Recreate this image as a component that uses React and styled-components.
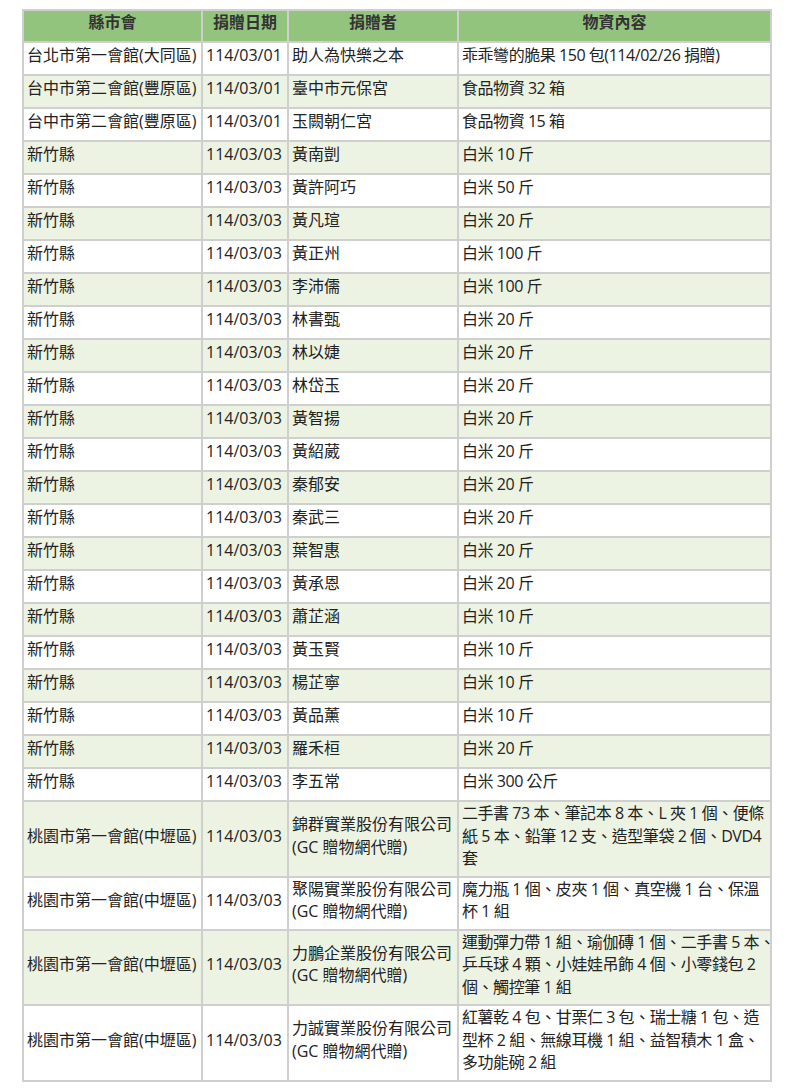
import React from "react";
import styled, { createGlobalStyle } from "styled-components";

const GlobalStyle = createGlobalStyle`
  body {
    margin: 0;
    background: #ffffff;
    font-family: "Open Sans", "Noto Sans CJK TC", sans-serif;
    color: #222222;
  }
`;

const donors = [
  "黃南剴", "黃許阿巧", "黃凡瑄", "黃正州", "李沛儒", "林書甄", "林以婕",
  "林岱玉", "黃智揚", "黃紹葳", "秦郁安", "秦武三", "葉智惠", "黃承恩",
  "蕭芷涵", "黃玉賢", "楊芷寧", "黃品薰", "羅禾桓", "李五常",
];
const riceAmount = [
  "10 斤", "50 斤", "20 斤", "100 斤", "100 斤", "20 斤", "20 斤",
  "20 斤", "20 斤", "20 斤", "20 斤", "20 斤", "20 斤", "20 斤",
  "10 斤", "10 斤", "10 斤", "10 斤", "20 斤", "300 公斤",
];

const rows = [
  {
    branch: "台北市第一會館(大同區)",
    date: "114/03/01",
    donor: ["助人為快樂之本"],
    items: ["乖乖彎的脆果 150 包(114/02/26 捐贈)"],
  },
  {
    branch: "台中市第二會館(豐原區)",
    date: "114/03/01",
    donor: ["臺中市元保宮"],
    items: ["食品物資 32 箱"],
  },
  {
    branch: "台中市第二會館(豐原區)",
    date: "114/03/01",
    donor: ["玉闕朝仁宮"],
    items: ["食品物資 15 箱"],
  },
  ...donors.map((name, i) => ({
    branch: "新竹縣",
    date: "114/03/03",
    donor: [name],
    items: ["白米 " + riceAmount[i]],
  })),
  {
    branch: "桃園市第一會館(中壢區)",
    date: "114/03/03",
    donor: ["錦群實業股份有限公司", "(GC 贈物網代贈)"],
    items: [
      "二手書 73 本、筆記本 8 本、L 夾 1 個、便條",
      "紙 5 本、鉛筆 12 支、造型筆袋 2 個、DVD4",
      "套",
    ],
  },
  {
    branch: "桃園市第一會館(中壢區)",
    date: "114/03/03",
    donor: ["聚陽實業股份有限公司", "(GC 贈物網代贈)"],
    items: ["魔力瓶 1 個、皮夾 1 個、真空機 1 台、保溫", "杯 1 組"],
  },
  {
    branch: "桃園市第一會館(中壢區)",
    date: "114/03/03",
    donor: ["力鵬企業股份有限公司", "(GC 贈物網代贈)"],
    items: [
      "運動彈力帶 1 組、瑜伽磚 1 個、二手書 5 本、",
      "乒乓球 4 顆、小娃娃吊飾 4 個、小零錢包 2",
      "個、觸控筆 1 組",
    ],
  },
  {
    branch: "桃園市第一會館(中壢區)",
    date: "114/03/03",
    donor: ["力誠實業股份有限公司", "(GC 贈物網代贈)"],
    items: [
      "紅薯乾 4 包、甘栗仁 3 包、瑞士糖 1 包、造",
      "型杯 2 組、無線耳機 1 組、益智積木 1 盒、",
      "多功能碗 2 組",
    ],
  },
];

const Table = styled.table`
  margin: 9px 0 0 22px;
  width: 750px;
  table-layout: fixed;
  border-collapse: separate;
  border-spacing: 0;
  border-top: 2px solid #cfcfcf;
  border-left: 2px solid #cfcfcf;
  font-size: 16px;
  line-height: 22.5px;
`;

const Col = styled.col`
  width: ${(p) => p.$w}px;
`;

const HeadCell = styled.th`
  box-sizing: border-box;
  height: 32px;
  padding: 0 3px 0;
  vertical-align: top;
  text-align: center;
  font-weight: bold;
  color: #333333;
  background: #93c47d;
  border-right: 2px solid #cfcfcf;
  border-bottom: 2px solid #cfcfcf;
`;

const Row = styled.tr`
  background: ${(p) => (p.$alt ? "#edf3e3" : "#ffffff")};
`;

const Cell = styled.td`
  box-sizing: border-box;
  height: 33px;
  padding: ${(p) => (p.$tight ? "0 0 6px 3px" : "0 3px 6px")};
  vertical-align: middle;
  text-align: left;
  white-space: nowrap;
  letter-spacing: ${(p) => (p.$tight ? "-0.45px" : "0")};
  border-right: 2px solid #cfcfcf;
  border-bottom: 2px solid #cfcfcf;
`;

const Lines = ({ lines }) =>
  lines.map((line, i) => (
    <React.Fragment key={i}>
      {i > 0 && <br />}
      {line}
    </React.Fragment>
  ));

export default function App() {
  return (
    <>
      <GlobalStyle />
      <Table>
        <colgroup>
          <Col $w={179} />
          <Col $w={86} />
          <Col $w={170} />
          <Col $w={313} />
        </colgroup>
        <thead>
          <tr>
            <HeadCell>縣市會</HeadCell>
            <HeadCell>捐贈日期</HeadCell>
            <HeadCell>捐贈者</HeadCell>
            <HeadCell>物資內容</HeadCell>
          </tr>
        </thead>
        <tbody>
          {rows.map((r, i) => (
            <Row key={i} $alt={i % 2 === 1}>
              <Cell>{r.branch}</Cell>
              <Cell>{r.date}</Cell>
              <Cell>
                <Lines lines={r.donor} />
              </Cell>
              <Cell $tight>
                <Lines lines={r.items} />
              </Cell>
            </Row>
          ))}
        </tbody>
      </Table>
    </>
  );
}
